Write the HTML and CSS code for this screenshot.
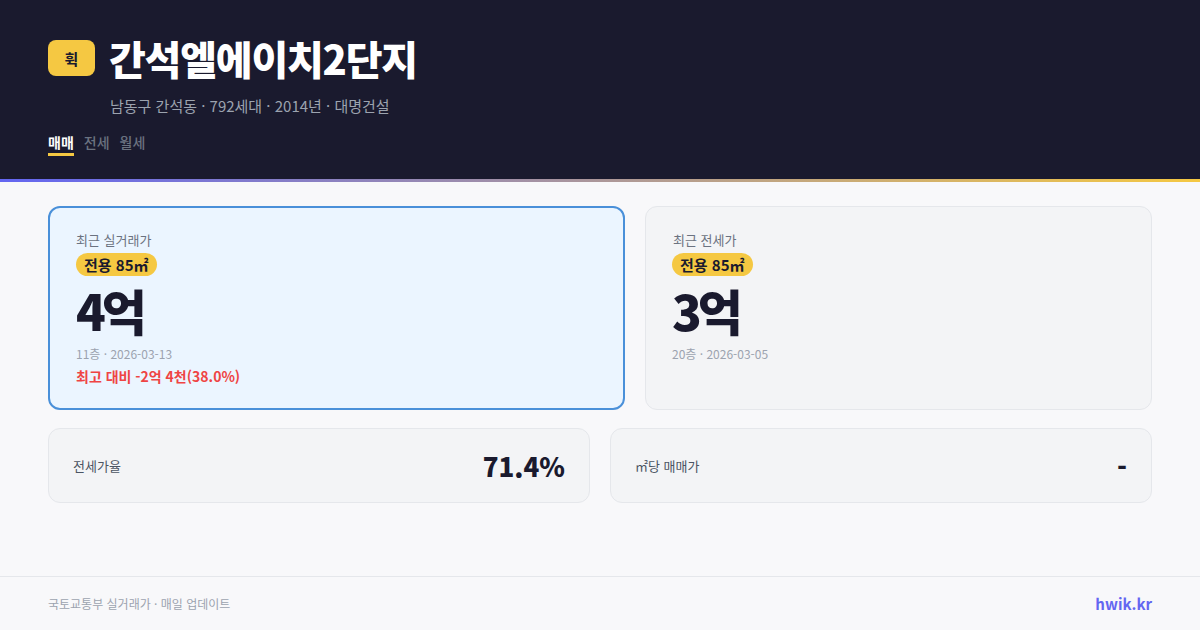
FILE: index.html
```html
<!DOCTYPE html>
<html lang="ko">
<head>
<meta charset="utf-8">
<link rel="stylesheet" href="styles.css">
</head>
<body>
<header class="hero">
  <div class="title-row">
    <span class="logo">휙</span>
    <h1 class="title">간석엘에이치2단지</h1>
  </div>
  <p class="sub">남동구 간석동 · 792세대 · 2014년 · 대명건설</p>
  <nav class="tabs">
    <span class="tab active">매매</span>
    <span class="tab">전세</span>
    <span class="tab">월세</span>
  </nav>
</header>
<div class="bar"></div>
<main class="main">
  <section class="top">
    <div class="card card-primary">
      <div class="label">최근 실거래가</div>
      <span class="chip">전용 85㎡</span>
      <div class="price">4억</div>
      <div class="meta">11층 · 2026-03-13</div>
      <div class="diff">최고 대비 -2억 4천(38.0%)</div>
    </div>
    <div class="card">
      <div class="label">최근 전세가</div>
      <span class="chip">전용 85㎡</span>
      <div class="price">3억</div>
      <div class="meta">20층 · 2026-03-05</div>
    </div>
  </section>
  <section class="stats">
    <div class="stat">
      <span class="stat-label">전세가율</span>
      <span class="stat-value">71.4%</span>
    </div>
    <div class="stat">
      <span class="stat-label">㎡당 매매가</span>
      <span class="stat-value">-</span>
    </div>
  </section>
</main>
<footer class="foot">
  <span class="foot-text">국토교통부 실거래가 · 매일 업데이트</span>
  <span class="brand">hwik.kr</span>
</footer>
</body>
</html>
```
FILE: styles.css
```css
* { box-sizing: border-box; margin: 0; padding: 0; }
html, body { height: 100%; }
body {
  font-family: "Noto Sans CJK KR", "Noto Sans", sans-serif;
  background: #f8f8fa;
  color: #1a1a2e;
  display: flex;
  flex-direction: column;
  width: 1200px;
  height: 630px;
  overflow: hidden;
}
.hero {
  background: #1a1a2e;
  padding: 35px 48px 0;
  height: 179px;
}
.title-row {
  display: flex;
  align-items: center;
  gap: 14px;
}
.logo {
  width: 47px;
  height: 36px;
  border-radius: 8px;
  background: #f5c842;
  color: #1a1a2e;
  font-weight: 700;
  font-size: 15px;
  display: flex;
  align-items: center;
  justify-content: center;
}
.title {
  color: #fff;
  font-size: 40px;
  font-weight: 800;
  letter-spacing: -1.2px;
  line-height: 46px;
}
.sub {
  margin: 14px 0 0 62px;
  color: #9ca3af;
  font-size: 15px;
  line-height: 22px;
}
.tabs {
  display: flex;
  gap: 10px;
  margin-top: 15px;
}
.tab {
  font-size: 14px;
  color: #6b7280;
  font-weight: 500;
  line-height: 20px;
  padding-bottom: 1px;
}
.tab.active {
  color: #fff;
  font-weight: 700;
  border-bottom: 3px solid #f5c842;
}
.bar {
  height: 3px;
  background: linear-gradient(90deg, #6366f1, #f5c842);
}
.main {
  flex: 1;
  padding: 24px 48px 0;
  display: flex;
  flex-direction: column;
  gap: 18px;
}
.top {
  display: grid;
  grid-template-columns: 577fr 507fr;
  gap: 20px;
}
.card {
  background: #f3f4f6;
  border: 1px solid #e5e7eb;
  border-radius: 12px;
  padding: 24px 26px;
  height: 204px;
  display: flex;
  flex-direction: column;
  align-items: flex-start;
}
.card-primary {
  background: #ebf5ff;
  border: 2px solid #4a90d9;
  padding: 23px 26px;
}
.card:not(.card-primary) .label { margin-left: 1px; }
.label {
  font-size: 13px;
  color: #6b7280;
  line-height: 18px;
}
.chip {
  margin-top: 4px;
  background: #f5c842;
  color: #1a1a2e;
  font-size: 15px;
  font-weight: 700;
  line-height: 23px;
  padding: 0 8px;
  border-radius: 12px;
}
.price {
  font-size: 49px;
  font-weight: 800;
  line-height: 60px;
  letter-spacing: -4px;
  margin-top: 4px;
  color: #1a1a2e;
}
.meta {
  margin-top: 5px;
  font-size: 12px;
  color: #9ca3af;
  line-height: 18px;
}
.diff {
  margin-top: 3px;
  font-size: 14px;
  font-weight: 700;
  color: #ef4444;
  line-height: 20px;
}
.stats {
  display: grid;
  grid-template-columns: 1fr 1fr;
  gap: 20px;
}
.stat {
  background: #f3f4f6;
  border: 1px solid #e5e7eb;
  border-radius: 12px;
  height: 75px;
  padding: 0 24px;
  display: flex;
  align-items: center;
  justify-content: space-between;
}
.stat-label {
  font-size: 13px;
  color: #4b5563;
}
.stat-value {
  font-size: 26px;
  font-weight: 800;
  color: #1a1a2e;
}
.foot {
  height: 54px;
  border-top: 1px solid #e5e7eb;
  padding: 0 48px;
  display: flex;
  align-items: center;
  justify-content: space-between;
}
.foot-text {
  font-size: 12px;
  color: #9ca3af;
}
.brand {
  font-size: 15px;
  font-weight: 700;
  color: #6366f1;
}
```
